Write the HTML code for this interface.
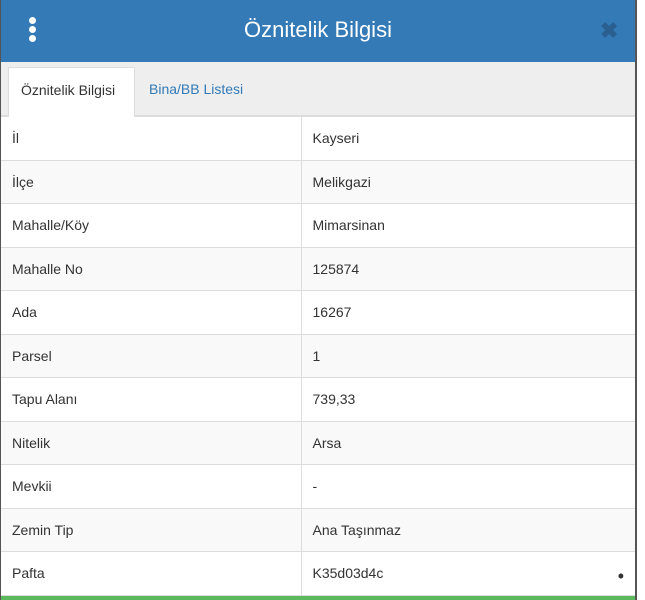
<!DOCTYPE html><html><head><style>
body{margin:0;width:645px;height:600px;overflow:hidden;background:#fff;font-family:"Liberation Sans",sans-serif;position:relative}
.panel{position:absolute;left:0;top:0;width:634px;height:600px;border-left:1px solid #555;border-right:2px solid #555;background:#fff}
.hdr{height:62px;background:#337ab7;position:relative;color:#fff}
.hdr h1{margin:0;text-align:center;font-size:22px;font-weight:normal;line-height:60px}
.dots{position:absolute;left:28px;top:17px}
.dots i{display:block;width:7px;height:7px;border-radius:50%;background:#fff;margin-bottom:2px}
.x{position:absolute;left:599px;top:18px;font-size:22px;color:#2a5f8f;font-weight:bold}
.tabs{height:54px;background:#eee;border-bottom:1px solid #ddd;position:relative;box-sizing:border-box}
.tab{position:absolute;top:5px;height:50px;font-size:14px;padding:0 13px}
.t1{left:7px;background:#fff;border:1px solid #ddd;border-bottom:none;color:#333;box-sizing:border-box;width:127px;padding:0 0 0 12px;line-height:44px}
.t2{left:135px;color:#337ab7;line-height:44px}
table{border-collapse:collapse;width:634px;font-size:14px;color:#333}
tr{height:43.5px}
td{border:1px solid #ddd;height:43.5px;padding:0 11px;box-sizing:border-box}
td:first-child{width:300px;border-left:none}
td:last-child{border-right:none}
tr:nth-child(even) td{background:#f9f9f9}
.green{position:absolute;left:0;top:596px;width:634px;height:4px;background:#5cb85c}
</style></head><body><div class="panel">
<div class="hdr"><div class="dots"><i></i><i></i><i></i></div><h1>Öznitelik Bilgisi</h1><div class="x">✖</div></div>
<div class="tabs"><div class="tab t1">Öznitelik Bilgisi</div><div class="tab t2">Bina/BB Listesi</div></div>
<table>
<tr><td>İl</td><td>Kayseri</td></tr>
<tr><td>İlçe</td><td>Melikgazi</td></tr>
<tr><td>Mahalle/Köy</td><td>Mimarsinan</td></tr>
<tr><td>Mahalle No</td><td>125874</td></tr>
<tr><td>Ada</td><td>16267</td></tr>
<tr><td>Parsel</td><td>1</td></tr>
<tr><td>Tapu Alanı</td><td>739,33</td></tr>
<tr><td>Nitelik</td><td>Arsa</td></tr>
<tr><td>Mevkii</td><td>-</td></tr>
<tr><td>Zemin Tip</td><td>Ana Taşınmaz</td></tr>
<tr><td>Pafta</td><td>K35d03d4c<span style="float:right;font-size:18px;line-height:10px;margin-top:6px">•</span></td></tr>
</table>
<div class="green"></div>
</div></body></html>
